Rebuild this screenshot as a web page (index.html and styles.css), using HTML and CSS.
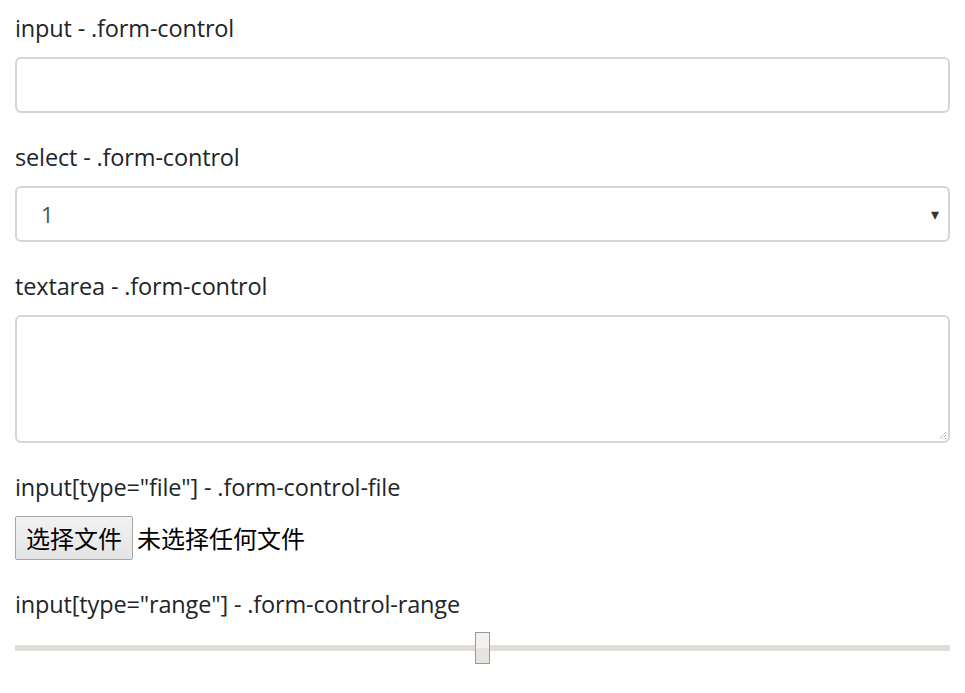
FILE: index.html
```html
<!DOCTYPE html>
<html lang="zh">
<head>
<meta charset="utf-8">
<title>Forms</title>
<link rel="stylesheet" href="styles.css">
</head>
<body>
<form class="page">
  <div class="form-group">
    <label class="label" for="f1">input - .form-control</label>
    <input id="f1" class="form-control" type="text">
  </div>
  <div class="form-group">
    <label class="label" for="f2">select - .form-control</label>
    <div class="select">
      <span class="select-value">1</span>
      <span class="select-arrow">&#9662;</span>
    </div>
  </div>
  <div class="form-group">
    <label class="label" for="f3">textarea - .form-control</label>
    <div class="textarea-wrap">
      <textarea id="f3" class="form-control textarea" rows="3"></textarea>
      <svg class="grip" width="10" height="10" viewBox="0 0 10 10"><path d="M9 2 L2 9 M9 5 L5 9 M9 8 L8 9" stroke="#888" stroke-width="1" stroke-dasharray="1 1" fill="none"/></svg>
    </div>
  </div>
  <div class="form-group">
    <label class="label">input[type="file"] - .form-control-file</label>
    <div class="file">
      <button type="button" class="file-btn">选择文件</button>
      <span class="file-text">未选择任何文件</span>
    </div>
  </div>
  <div class="form-group">
    <label class="label" for="f5">input[type="range"] - .form-control-range</label>
    <input id="f5" class="range" type="range" min="0" max="100" value="50">
  </div>
</form>
</body>
</html>
```
FILE: styles.css
```css
* { box-sizing: border-box; }
html, body { margin: 0; padding: 0; background: #fff; }
body {
  font-family: "Open Sans", "Noto Sans CJK SC", sans-serif;
  font-size: 24px;
  line-height: 1.5;
  color: #212529;
}
.page { padding: 10px 15px 0 15px; }
.form-group { margin-bottom: 26px; }
.label {
  display: block;
  height: 36px;
  line-height: 36px;
  margin-bottom: 11px;
  font-size: 23.5px;
  letter-spacing: -0.15px;
}
.form-control {
  display: block;
  width: 100%;
  height: 56px;
  padding: 9px 18px;
  font: inherit;
  color: #495057;
  background: #fff;
  border: 2px solid #d2d6db;
  border-radius: 6px;
  outline: none;
}
.select {
  display: flex;
  align-items: center;
  justify-content: space-between;
  height: 56px;
  padding: 0 9px 0 23px;
  border: 2px solid #d2d6db;
  border-radius: 6px;
  color: #495057;
  font-size: 22px;
}
.select-value { padding-left: 1px; }
.select-arrow { font-size: 16px; color: #333; }
.textarea-wrap { position: relative; }
.textarea { height: 128px; resize: none; }
.grip { position: absolute; right: 3px; bottom: 3px; }
.file { display: flex; align-items: center; height: 44px; }
.file-btn {
  height: 44px;
  padding: 0 10px;
  font-family: "Noto Sans CJK SC", sans-serif;
  font-size: 24px;
  line-height: 1;
  color: #000;
  background: linear-gradient(#f2f2f2, #e4e4e4);
  border: 1px solid #a7a7a7;
  border-radius: 2px;
}
.file-text {
  margin-left: 4px;
  font-family: "Noto Sans CJK SC", sans-serif;
  font-size: 24px;
  color: #000;
}
.range {
  -webkit-appearance: none;
  appearance: none;
  display: block;
  width: 100%;
  height: 32px;
  margin: -1px 0 0;
  background: transparent;
}
.range::-webkit-slider-runnable-track {
  height: 6px;
  background: #e1ddd8;
}
.range::-webkit-slider-thumb {
  -webkit-appearance: none;
  width: 15px;
  height: 32px;
  margin-top: -13px;
  border: 1px solid #9c9790;
  background: linear-gradient(#f2f1ef 0 50%, #e7e3df 50% 100%);
}
```
